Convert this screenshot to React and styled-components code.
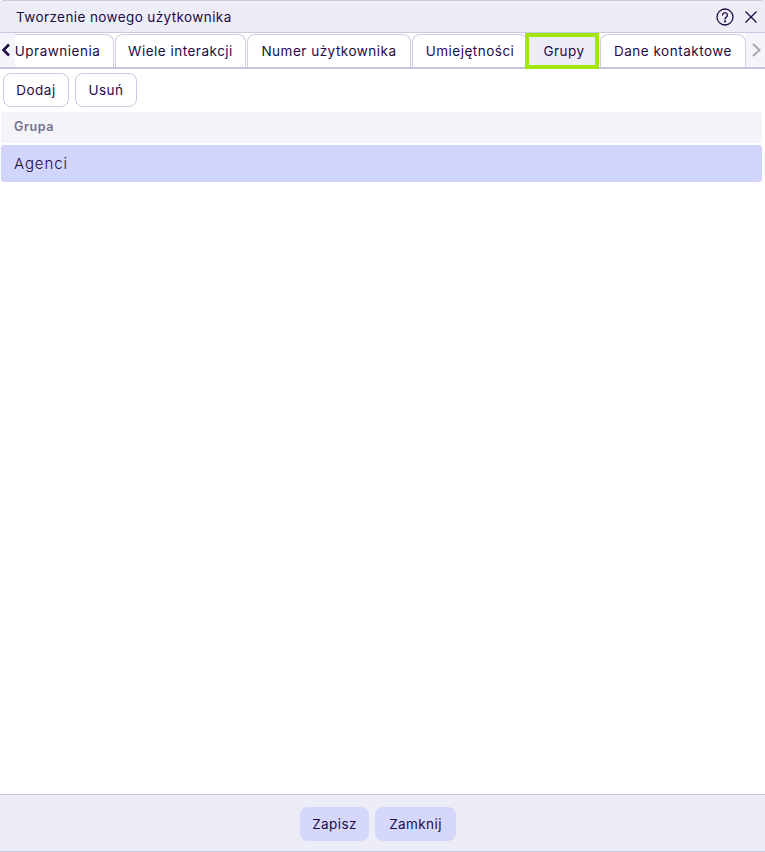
import React from 'react'
import styled, { createGlobalStyle } from 'styled-components'

const GlobalStyle = createGlobalStyle`
  html, body { margin: 0; padding: 0; background: #fff; }
  body { font-family: 'Inter', 'Noto Sans', sans-serif; color: #1f0a45; }
  * { box-sizing: border-box; }
`

const Dialog = styled.div`
  width: 765px;
  height: 852px;
  display: flex;
  flex-direction: column;
  background: #fff;
`

const TitleBar = styled.div`
  height: 33px;
  display: flex;
  align-items: center;
  padding: 0 7px 0 16px;
  background: #ecedf7;
  border-top: 1px solid #c9c9e2;
  border-bottom: 1px solid #c9c9e2;
  border-radius: 4px 4px 0 0;
`

const Title = styled.div`
  flex: 1;
  font-size: 13.5px;
  letter-spacing: 0.4px;
`

const IconButton = styled.span`
  display: flex;
  margin-left: ${p => p.$gap || 0}px;
`

const TabBar = styled.div`
  height: 36px;
  display: flex;
  background: #fff;
  border-bottom: 2px solid #c4c4dc;
`

const Arrow = styled.div`
  flex: none;
  width: ${p => p.$width}px;
  display: flex;
  align-items: center;
  justify-content: ${p => p.$right ? 'center' : 'flex-start'};
  background: #f4f4fb;
  padding-left: ${p => p.$right ? 0 : 1}px;
`

const TabScroller = styled.div`
  flex: 1;
  min-width: 0;
  display: flex;
  justify-content: flex-end;
  align-items: flex-end;
  gap: 1px;
  overflow-x: clip;
  overflow-y: visible;
`

const Tab = styled.div`
  flex: none;
  width: ${p => p.$width}px;
  height: 33px;
  display: flex;
  align-items: center;
  justify-content: center;
  font-size: 13.5px;
  letter-spacing: 0.5px;
  background: #fff;
  border: 1px solid #cfcfe6;
  border-bottom: none;
  border-radius: 8px 8px 0 0;
`

const ActiveTab = styled(Tab)`
  height: 36px;
  margin: 0 0 -2px -4px;
  padding-left: 4px;
  background: #ecedf7;
  border: 4px solid #a2e60f;
  border-radius: 0;
`

const Toolbar = styled.div`
  display: flex;
  gap: 6px;
  padding: 4px 3px 5px;
`

const ToolButton = styled.button`
  width: ${p => p.$width}px;
  height: 34px;
  padding: 0;
  font: inherit;
  font-size: 13.5px;
  letter-spacing: 0.5px;
  color: inherit;
  background: #fff;
  border: 1px solid #c9c9e2;
  border-radius: 8px;
`

const Content = styled.div`
  flex: 1;
  padding: 0 3px 0 1px;
`

const GridHeader = styled.div`
  height: 31px;
  display: flex;
  align-items: center;
  padding: 0 0 2px 13px;
  font-size: 12.5px;
  font-weight: 600;
  letter-spacing: 0.6px;
  color: #76708f;
  background: #f3f3f8;
  border-radius: 3px;
`

const GridRow = styled.div`
  height: 37px;
  margin-top: 2px;
  display: flex;
  align-items: center;
  padding-left: 13px;
  font-size: 15px;
  font-weight: 300;
  letter-spacing: 0.9px;
  background: #d2d5fa;
  border-radius: 3px;
`

const Footer = styled.div`
  height: 58px;
  display: flex;
  align-items: center;
  justify-content: center;
  gap: 6px;
  padding: 2px 9px 0 0;
  background: #ecedf7;
  border-top: 1px solid #c9c9e2;
  border-bottom: 1px solid #c9c9e2;
`

const FooterButton = styled.button`
  width: ${p => p.$width}px;
  height: 34px;
  padding: 0;
  font: inherit;
  font-size: 13.5px;
  letter-spacing: 0.4px;
  color: inherit;
  background: #d5d8fb;
  border: none;
  border-radius: 8px;
`

const HelpIcon = () => (
  <svg width="18" height="18" viewBox="0 0 18 18" fill="none" stroke="#1f0a45" strokeWidth="1.3" strokeLinecap="round">
    <circle cx="9" cy="9" r="8" />
    <path d="M6.6 7.1a2.4 2.4 0 1 1 3.7 2c-.9.6-1.3 1-1.3 2" />
    <circle cx="9" cy="13.4" r=".4" fill="#1f0a45" />
  </svg>
)

const CloseIcon = () => (
  <svg width="14" height="14" viewBox="0 0 14 14" fill="none" stroke="#1f0a45" strokeWidth="1.3">
    <path d="M1.5 1.5l11 11M12.5 1.5l-11 11" />
  </svg>
)

const Chevron = ({ d, color, weight }) => (
  <svg width="10" height="16" viewBox="0 0 10 16" fill="none" stroke={color} strokeWidth={weight}>
    <path d={d} />
  </svg>
)

const tabs = [
  { label: 'Uprawnienia', width: 113 },
  { label: 'Wiele interakcji', width: 131 },
  { label: 'Numer użytkownika', width: 164 },
  { label: 'Umiejętności', width: 116 },
  { label: 'Grupy', width: 74, active: true },
  { label: 'Dane kontaktowe', width: 146 },
]

const App = () => (
  <Dialog>
    <GlobalStyle />
    <TitleBar>
      <Title>Tworzenie nowego użytkownika</Title>
      <IconButton><HelpIcon /></IconButton>
      <IconButton $gap={10}><CloseIcon /></IconButton>
    </TitleBar>
    <TabBar>
      <Arrow $width={15}>
        <Chevron d="M8 2.5L2.5 8L8 13.5" color="#1f0a45" weight="2.5" />
      </Arrow>
      <TabScroller>
        {tabs.map(t => t.active
          ? <ActiveTab key={t.label} $width={t.width}>{t.label}</ActiveTab>
          : <Tab key={t.label} $width={t.width}>{t.label}</Tab>)}
      </TabScroller>
      <Arrow $width={19} $right>
        <Chevron d="M2 2L8.5 8L2 14" color="#a8a8ae" weight="2" />
      </Arrow>
    </TabBar>
    <Toolbar>
      <ToolButton $width={66}>Dodaj</ToolButton>
      <ToolButton $width={62}>Usuń</ToolButton>
    </Toolbar>
    <Content>
      <GridHeader>Grupa</GridHeader>
      <GridRow>Agenci</GridRow>
    </Content>
    <Footer>
      <FooterButton $width={69}>Zapisz</FooterButton>
      <FooterButton $width={81}>Zamknij</FooterButton>
    </Footer>
  </Dialog>
)

export default App
